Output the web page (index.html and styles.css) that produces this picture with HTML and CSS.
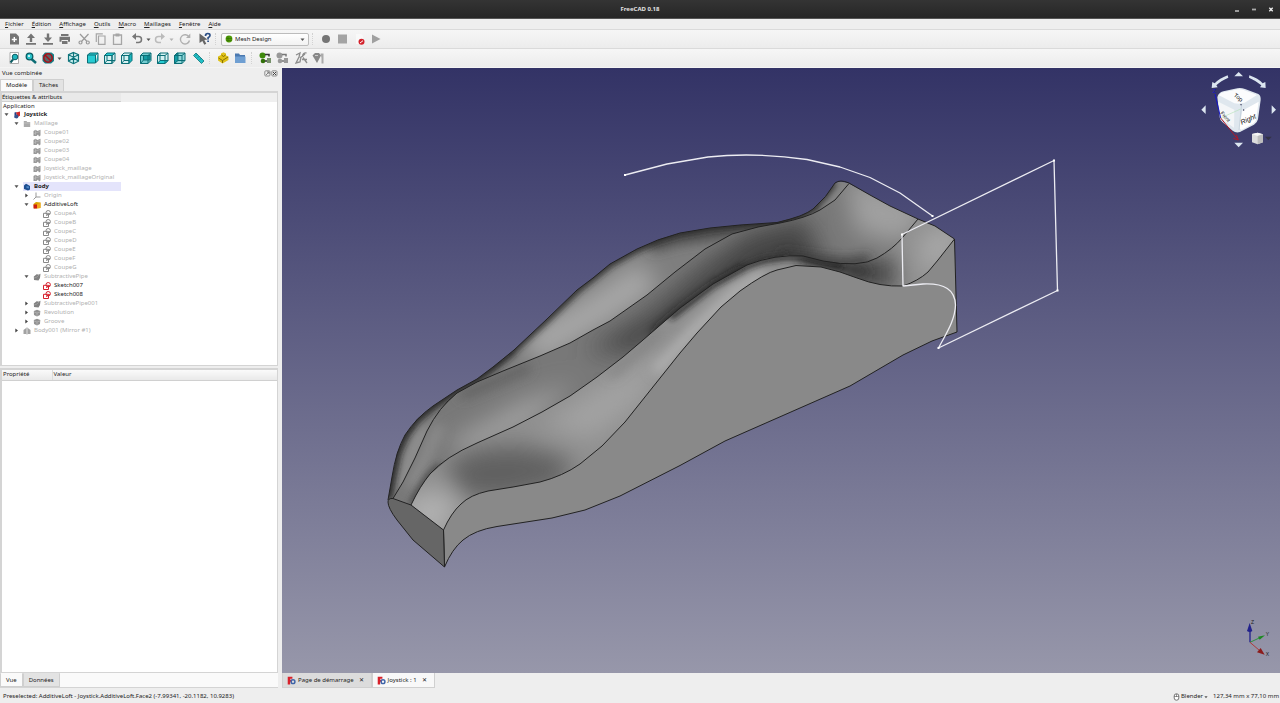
FILE: index.html
```html
<!DOCTYPE html>
<html lang="fr">
<head>
<meta charset="utf-8">
<title>FreeCAD 0.18</title>
<link rel="stylesheet" href="styles.css">
</head>
<body>
<svg class="sprite" aria-hidden="true">
  <symbol id="caret" viewBox="0 0 5 5"><path d="M.5 1.5h4l-2 2.500z" fill="#555"/></symbol>
  <symbol id="down" viewBox="0 0 7 7"><path d="M1.500 2.300h4L3.500 5z" fill="#555"/></symbol>
  <symbol id="right" viewBox="0 0 7 7"><path d="M2.300 1.500v4L5 3.500z" fill="#444"/></symbol>
  <symbol id="mesh" viewBox="0 0 8 8"><path d="M.5 2l2-1.200 2 1.200L7.500.8v5.700L6 7.500 5 5.500 3.500 7 .5 7z" fill="#989898"/><path d="M2.500 1v5M1 4.500l6-2" stroke="#c4c4c4" stroke-width=".5"/></symbol>
  <symbol id="sketch" viewBox="0 0 8 8"><g fill="none" stroke="currentColor" stroke-width="1"><path d="M.5 3.300h5v4.200h-5z"/><circle cx="5.200" cy="2.700" r="2.200"/><path d="M3 5.500l4-2"/></g></symbol>
  <symbol id="folder" viewBox="0 0 8 8"><path d="M.8 1h2.700l.7 1h3v5H.8z" fill="#aaa"/><path d="M1 3h6" stroke="#ccc" stroke-width=".6"/></symbol>
  <symbol id="joy" viewBox="0 0 8 8"><path d="M1.500 1.500l2-.5v6h-2z" fill="#24418a"/><path d="M3 1.500L7 .5v4.200L4.500 6z" fill="#d22b2b"/><circle cx="3.500" cy="5.500" r="1.900" fill="#35558f"/></symbol>
  <symbol id="body" viewBox="0 0 8 8"><path d="M1 2.500L3 .8l1.500.7L7 3v3.500L5 7.500 1 6z" fill="#1d4f91"/><path d="M3.500 3L6 3.500v2L3.500 5z" fill="#4d86c6"/></symbol>
  <symbol id="origin" viewBox="0 0 8 8"><path d="M3 .5v4.500h4.500M3 5L.5 7.500" stroke="#999" fill="none"/></symbol>
  <symbol id="loft" viewBox="0 0 8 8"><path d="M.5 3L3 1l4.500.5V7L1 7.500z" fill="#d9a400"/><path d="M.5 3.500H4v4H.5z" fill="#cc1d12"/><path d="M4 3.500l3.500-2V7L4 7.500z" fill="#f0a81c"/></symbol>
  <symbol id="pipe" viewBox="0 0 8 8"><path d="M.8 3.500L4 1l1 .8L7.500.8 7 5 5.500 7.500 1 7z" fill="#828282"/><path d="M1 5l3-1 3-3" stroke="#aaa" stroke-width=".6" fill="none"/></symbol>
  <symbol id="rev" viewBox="0 0 8 8"><path d="M.8 2L4 .8 7.300 2 7 6 4 7.500 1 6z" fill="#929292"/><path d="M1 3l3 1 3-1M4 4v3" stroke="#b8b8b8" stroke-width=".7" fill="none"/></symbol>
  <symbol id="mirror" viewBox="0 0 8 8"><path d="M.5 3l2.700-2v6H.5zM4.800 1l2.700 2v4H4.800z" fill="#a2a2a2"/><path d="M4 .5v7" stroke="#777" stroke-width=".7"/></symbol>
  <symbol id="fc" viewBox="0 0 10 10"><path d="M.8.8h5.200v2.200H3.500v1.300H5.500v2H3.500V9.500H.8z" fill="#d8202a"/><circle cx="6.700" cy="6.300" r="2.100" fill="none" stroke="#3d63a8" stroke-width="1.600"/></symbol>
  <symbol id="part" viewBox="0 0 16 16"><path d="M3 6.500L6 5V3.500l2.500-1.300L11 3.500V5.500l2.500 1V10l-6 3.500-4.500-3z" fill="#e0c219"/><path d="M3.500 8l4 2.500 5.500-3.500M7.500 10.500v2.500M6.500 5l2 1.500L10.500 5" stroke="#7d6800" stroke-width=".9" fill="none"/></symbol>
</svg>

<header class="titlebar">
  <h1>FreeCAD 0.18</h1>
  <div class="wm">
    <button aria-label="Réduire"><svg viewBox="0 0 8 8"><path d="M2 6h4" stroke="#e4e4e4" stroke-width="1.200"/></svg></button>
    <button aria-label="Agrandir"><svg viewBox="0 0 8 8"><path d="M2 4.500h4" stroke="#aaa" stroke-width="1.800"/></svg></button>
    <button aria-label="Fermer"><svg viewBox="0 0 8 8"><path d="M2.300 2.800l3.400 3.400M5.700 2.800L2.300 6.200" stroke="#eee" stroke-width="1.300"/></svg></button>
  </div>
</header>

<nav class="menubar">
  <button><u>F</u>ichier</button><button><u>É</u>dition</button><button><u>A</u>ffichage</button><button><u>O</u>utils</button><button><u>M</u>acro</button><button><u>M</u>aillages</button><button><u>F</u>enêtre</button><button><u>A</u>ide</button>
</nav>

<div class="toolbar">
  <div class="group">
    <button aria-label="Nouveau"><svg viewBox="0 0 16 16"><path d="M4 2.500h6l3 3v8H4z" fill="#757575"/><path d="M8.300 6v5M5.800 8.500h5" stroke="#fff" stroke-width="1.400"/></svg></button>
    <button aria-label="Ouvrir"><svg viewBox="0 0 16 16"><path d="M8 2.500l4 4.500H9.200v4H6.800V7H4zM3 12h10v1.700H3z" fill="#757575"/></svg></button>
    <button aria-label="Enregistrer"><svg viewBox="0 0 16 16"><path d="M6.800 2.500h2.400v4H12L8 11 4 6.500h2.800zM3 12h10v1.700H3z" fill="#757575"/></svg></button>
    <button aria-label="Imprimer"><svg viewBox="0 0 16 16"><path d="M4 3h7.500v2H4zM2.500 5.700h10.500v5H11V9H4.500v1.700h-2zM5 10h5.500v3H5z" fill="#757575"/></svg></button>
  </div>
  <div class="group">
    <button aria-label="Couper"><svg viewBox="0 0 16 16" fill="none" stroke="#9a9a9a" stroke-width="1.200"><path d="M4 3l7 7.500M12.500 3L5.500 10.500"/><circle cx="4.500" cy="11.500" r="1.500"/><circle cx="11.800" cy="11.500" r="1.500"/></svg></button>
    <button aria-label="Copier"><svg viewBox="0 0 16 16" fill="none" stroke="#a6a6a6" stroke-width="1.200"><path d="M5.500 5h6.500v8.300H5.500zM3.300 11V2.800h6.500"/></svg></button>
    <button aria-label="Coller"><svg viewBox="0 0 16 16" fill="none" stroke="#a6a6a6" stroke-width="1.300"><path d="M3.500 4h8v9.300h-8z"/><path d="M5.500 4h4" stroke-width="3"/></svg></button>
  </div>
  <div class="group">
    <button aria-label="Annuler"><svg viewBox="0 0 16 16"><path d="M4.500 5.500h5a3 3 0 010 6H7" fill="none" stroke="#777" stroke-width="1.500"/><path d="M3 5.500L7 2v7z" fill="#777"/></svg></button>
    <button class="drop" aria-label="Liste d'annulation"><svg><use href="#caret"/></svg></button>
    <button aria-label="Rétablir"><svg viewBox="0 0 16 16"><path d="M10.500 5.500h-4a3 3 0 000 6H9" fill="none" stroke="#bbb" stroke-width="1.500"/><path d="M13 5.500L9 2v7z" fill="#bbb"/></svg></button>
    <button class="drop faint" aria-label="Liste de rétablissement"><svg><use href="#caret"/></svg></button>
  </div>
  <button aria-label="Actualiser"><svg viewBox="0 0 16 16"><path d="M12 6A4.600 4.600 0 1012.500 9.500" fill="none" stroke="#b0b0b0" stroke-width="1.400"/><path d="M13.300 2.500v4.500H9z" fill="#b0b0b0"/></svg></button>
  <button aria-label="Qu'est-ce que c'est ?"><svg viewBox="0 0 16 16"><path d="M3.500 2.500l8 6-3.200.5 2 3.700-2 1-1.900-3.700L3.500 12z" fill="#666"/><path d="M9.500 5q0-2.500 2.300-2.500T14 4.500q0 1.200-1.900 2.300v1.700M12.100 9.500v1.500" stroke="#2c4f86" stroke-width="1.700" fill="none"/></svg></button>
  <span class="handle"></span>
  <label class="combo"><svg viewBox="0 0 8 8"><circle cx="4" cy="4" r="3.400" fill="#4e9a06"/><path d="M1 3.500h6M1.500 5.500h5M3 1v6" stroke="#2f6604" stroke-width=".5"/></svg>
    <select aria-label="Atelier"><option>Mesh Design</option></select><svg class="arrow"><use href="#caret"/></svg></label>
  <span class="handle"></span>
  <div class="group">
    <button aria-label="Enregistrer la macro"><svg viewBox="0 0 16 16"><circle cx="8" cy="8" r="4" fill="#757575"/></svg></button>
    <button aria-label="Arrêter"><svg viewBox="0 0 16 16"><path d="M3 3.500h9v9H3z" fill="#a3a3a3"/></svg></button>
    <button aria-label="Macros"><svg viewBox="0 0 16 16"><path d="M4 3h5l2 2v8H4z" fill="#f9f9f9"/><circle cx="9.500" cy="10.800" r="3" fill="#d3222c"/><path d="M8 12l3-2.300" stroke="#fff"/></svg></button>
    <button aria-label="Exécuter"><svg viewBox="0 0 16 16"><path d="M3 3.500l8.500 4.500L3 12.500z" fill="#a0a0a0"/></svg></button>
  </div>
</div>

<div class="toolbar">
  <div class="group">
    <button aria-label="Tout afficher"><svg viewBox="0 0 16 16"><path d="M4 2.500h8.500v11H4z" fill="#fff" stroke="#999" stroke-width=".8"/><circle cx="9" cy="7" r="2.800" fill="#20b5bd" stroke="#0c5c63"/><path d="M7 9.500L4.500 12.500" stroke="#0c5c63" stroke-width="2"/></svg></button>
    <button aria-label="Zoom sur la sélection"><svg viewBox="0 0 16 16"><path d="M8.500 9l4.500 4" stroke="#0c6d75" stroke-width="2.500"/><circle cx="6.500" cy="6.500" r="3.300" fill="#2bc4cb" stroke="#0c5c63" stroke-width="1.300"/><circle cx="6" cy="6" r="1" fill="#fff"/></svg></button>
    <button aria-label="Style de représentation"><svg viewBox="0 0 16 16"><path d="M2.500 5.500L5 2.500h6.500l2.500 2v6.500l-3 2.500H5L2.500 11z" fill="#168088"/><circle cx="8" cy="8" r="4.200" fill="#5a6668" stroke="#a81018" stroke-width="1.500"/><path d="M5 5l6 6" stroke="#a81018" stroke-width="1.500"/></svg></button>
    <button class="drop" aria-label="Styles"><svg><use href="#caret"/></svg></button>
  </div>
  <button aria-label="Isométrique"><svg viewBox="0 0 16 16" fill="#c4eeef" stroke="#0d747b" stroke-width="1.200"><path d="M8.500 2.500l5 2.200v6.500l-5 2.500-5-2.500V4.700zM3.500 4.700l5 2.500 5-2.500M8.500 2.500v11.200M3.500 11l5-3 5 3"/></svg></button>
  <div class="group cubes">
    <button aria-label="Face"><svg viewBox="0 0 16 16"><path d="M3.500 5h8v8h-8zM3.500 5L6 3h8l-2.500 2M14 3v7.500L11.500 13" fill="#26cbd2"/></svg></button>
    <button aria-label="Dessus"><svg viewBox="0 0 16 16"><path d="M3.500 5.500h7.500v8H3.500zM14 3v7.500l-3 3v-8z" fill="#d4f0f1"/><path d="M3.500 5.500L6 3h8l-3 2.500z" fill="#26cbd2"/><path d="M3.500 13.500L6 10.500h8M6 10.500V6"/></svg></button>
    <button aria-label="Droite"><svg viewBox="0 0 16 16"><path d="M3.500 5.500h7.500v8H3.500zM3.500 5.500L6 3h8l-3 2.500z" fill="#d4f0f1"/><path d="M14 3v7.500l-3 3v-8z" fill="#1bb6be"/><path d="M3.500 13.500L6 10.500h5M6 10.500V6"/></svg></button>
  </div>
  <div class="group cubes">
    <button aria-label="Arrière"><svg viewBox="0 0 16 16"><path d="M3.500 5.500L6 3h8v7.500l-3 3H3.500z" fill="#74cdd1"/><path d="M6.500 5.500h6.500V10H6.500z" fill="#159ca4"/><path d="M3.500 5.500h7.500v8M11 5.500L14 3M3.500 13.500L6.500 10"/></svg></button>
    <button aria-label="Dessous"><svg viewBox="0 0 16 16"><path d="M3.500 5.500L6 3h8v7.500l-3 3H3.500z" fill="#d4f0f1"/><path d="M3.500 13.500L6 10.500h8l-3 3z" fill="#26cbd2"/><path d="M3.500 5.500h7.500v8M11 5.500L14 3M6 3v7.500"/></svg></button>
    <button aria-label="Gauche"><svg viewBox="0 0 16 16"><path d="M3.500 5.500L6 3h8v7.500l-3 3H3.500z" fill="#8fd6d9"/><path d="M3.500 5.500L7 3v7.500l-3.500 3z" fill="#159ca4"/><path d="M3.500 5.500h7.500v8M11 5.500L14 3M7 10.500h7"/></svg></button>
  </div>
  <button aria-label="Mesurer"><svg viewBox="0 0 16 16"><path d="M6 3l8 8-2.500 2.500-8-8z" fill="#22c0c7" stroke="#0c747a" stroke-width=".8"/><path d="M6 5.500l1-1M8 7.500l1-1M10 9.500l1-1" stroke="#0c5c63"/></svg></button>
  <span class="handle"></span>
  <div class="group">
    <button aria-label="Créer une pièce"><svg><use href="#part"/></svg></button>
    <button aria-label="Créer un groupe"><svg viewBox="0 0 16 16"><path d="M3 3.500h4l1 1.500h5v8H3z" fill="#4b79b0"/><path d="M3 6.500h10.500v6.500H3z" fill="#6f9fd2"/></svg></button>
  </div>
  <span class="handle"></span>
  <div class="group">
    <button aria-label="Importer un maillage"><svg viewBox="0 0 16 16"><circle cx="5.500" cy="5.500" r="3" fill="#3e8a0c"/><circle cx="6" cy="11" r="2.300" fill="#2f6f08"/><path d="M8 4.500h4v2M8 11h4" stroke="#333" stroke-width="1.500" fill="none"/><path d="M10 8h4v5h-4z" fill="#77916b"/></svg></button>
    <button aria-label="Exporter un maillage"><svg viewBox="0 0 16 16"><circle cx="5.500" cy="5.500" r="3" fill="#999"/><circle cx="6" cy="11" r="2.300" fill="#999"/><path d="M8 4.500h4v2M8 11h4" stroke="#777" stroke-width="1.500" fill="none"/><path d="M10 8h4v5h-4z" fill="#999"/></svg></button>
  </div>
  <div class="group">
    <button aria-label="Analyser"><svg viewBox="0 0 16 16" stroke="#8c8c8c" stroke-width="1.300" fill="none"><path d="M3 5l4-2-1 4-3 6 4-1 1-5M13.500 3q-4-.5-4 4M9 9.500h5M10 7.500l4 5.500M7 8l5-4"/></svg></button>
    <button aria-label="Découper"><svg viewBox="0 0 16 16"><path d="M2.500 5.500L5 3h4l2 2.500L7 13z" fill="#888"/><path d="M5 5.500h3" stroke="#ccc"/><path d="M10.500 3.500H13.500v10h-2V8z" fill="#aaa"/></svg></button>
  </div>
</div>

<main class="work">
  <aside class="dock">
    <div class="dock-title"><h2>Vue combinée</h2>
      <button aria-label="Détacher"><svg viewBox="0 0 7 7"><rect x=".8" y=".8" width="5.200" height="5.200" rx="1" fill="none" stroke="#777" stroke-width=".8"/><path d="M2 5l2.500-2.500M3 2h2v2" stroke="#555" stroke-width=".7" fill="none"/></svg></button>
      <button aria-label="Fermer"><svg viewBox="0 0 7 7"><rect x=".8" y=".8" width="5.200" height="5.200" rx="1" fill="none" stroke="#777" stroke-width=".8"/><path d="M2 2l3 3M5 2L2 5" stroke="#333" stroke-width=".9"/></svg></button>
    </div>
    <div class="tabs"><button class="tab on">Modèle</button><button class="tab">Tâches</button></div>
    <section class="tree">
      <div class="tree-head"><span>Étiquettes &amp; attributs</span></div>
      <p class="root">Application</p>
      <ul>
        <li class="d0 bold"><button class="tw" aria-label="Replier"><svg><use href="#down"/></svg></button><span class="it"><svg><use href="#joy"/></svg>Joystick</span></li>
        <li class="d1 dim"><button class="tw" aria-label="Replier"><svg><use href="#down"/></svg></button><span class="it"><svg><use href="#folder"/></svg>Maillage</span></li>
        <li class="d2 dim"><i class="tw"></i><span class="it"><svg><use href="#mesh"/></svg>Coupe01</span></li>
        <li class="d2 dim"><i class="tw"></i><span class="it"><svg><use href="#mesh"/></svg>Coupe02</span></li>
        <li class="d2 dim"><i class="tw"></i><span class="it"><svg><use href="#mesh"/></svg>Coupe03</span></li>
        <li class="d2 dim"><i class="tw"></i><span class="it"><svg><use href="#mesh"/></svg>Coupe04</span></li>
        <li class="d2 dim"><i class="tw"></i><span class="it"><svg><use href="#mesh"/></svg>Joystick_maillage</span></li>
        <li class="d2 dim"><i class="tw"></i><span class="it"><svg><use href="#mesh"/></svg>Joystick_maillageOriginal</span></li>
        <li class="d1 bold hl"><button class="tw" aria-label="Replier"><svg><use href="#down"/></svg></button><span class="it"><svg><use href="#body"/></svg>Body</span></li>
        <li class="d2 dim"><button class="tw" aria-label="Déplier"><svg><use href="#right"/></svg></button><span class="it"><svg><use href="#origin"/></svg>Origin</span></li>
        <li class="d2"><button class="tw" aria-label="Replier"><svg><use href="#down"/></svg></button><span class="it"><svg><use href="#loft"/></svg>AdditiveLoft</span></li>
        <li class="d3 dim"><i class="tw"></i><span class="it"><svg><use href="#sketch"/></svg>CoupeA</span></li>
        <li class="d3 dim"><i class="tw"></i><span class="it"><svg><use href="#sketch"/></svg>CoupeB</span></li>
        <li class="d3 dim"><i class="tw"></i><span class="it"><svg><use href="#sketch"/></svg>CoupeC</span></li>
        <li class="d3 dim"><i class="tw"></i><span class="it"><svg><use href="#sketch"/></svg>CoupeD</span></li>
        <li class="d3 dim"><i class="tw"></i><span class="it"><svg><use href="#sketch"/></svg>CoupeE</span></li>
        <li class="d3 dim"><i class="tw"></i><span class="it"><svg><use href="#sketch"/></svg>CoupeF</span></li>
        <li class="d3 dim"><i class="tw"></i><span class="it"><svg><use href="#sketch"/></svg>CoupeG</span></li>
        <li class="d2 dim"><button class="tw" aria-label="Replier"><svg><use href="#down"/></svg></button><span class="it"><svg><use href="#pipe"/></svg>SubtractivePipe</span></li>
        <li class="d3 red"><i class="tw"></i><span class="it"><svg><use href="#sketch"/></svg>Sketch007</span></li>
        <li class="d3 red"><i class="tw"></i><span class="it"><svg><use href="#sketch"/></svg>Sketch008</span></li>
        <li class="d2 dim"><button class="tw" aria-label="Déplier"><svg><use href="#right"/></svg></button><span class="it"><svg><use href="#pipe"/></svg>SubtractivePipe001</span></li>
        <li class="d2 dim"><button class="tw" aria-label="Déplier"><svg><use href="#right"/></svg></button><span class="it"><svg><use href="#rev"/></svg>Revolution</span></li>
        <li class="d2 dim"><button class="tw" aria-label="Déplier"><svg><use href="#right"/></svg></button><span class="it"><svg><use href="#rev"/></svg>Groove</span></li>
        <li class="d1 dim"><button class="tw" aria-label="Déplier"><svg><use href="#right"/></svg></button><span class="it"><svg><use href="#mirror"/></svg>Body001 (Mirror #1)</span></li>
      </ul>
    </section>
    <section class="props">
      <table><thead><tr><th>Propriété</th><th>Valeur</th></tr></thead></table>
    </section>
    <div class="tabs bottom"><button class="tab on">Vue</button><button class="tab">Données</button></div>
  </aside>

  <section class="mdi">
    <div class="view">
      <svg class="scene" viewBox="282 68 998 605" preserveAspectRatio="xMidYMid slice" role="img" aria-label="Joystick">
        <defs>
          <clipPath id="c1"><path id="r1" d="M388 500 392 477 397 453 405 435 417 419 433 406 457 390 477 379 493 367 514 350 547 319 577 290 593 278 610 264 637 249 660 239 680 233 710 228 740 225 777 222.500 800 216 813 209 825 197 835 183 840 181.500 849 183 860 260 410 500z"/></clipPath>
          <clipPath id="c2"><path id="r2" d="M393 498.500 403 482 415 458 427 431 441 409 457 393 477 382 503 371 540 356 570 343 593 330 610 321 647 295 675 272 705 249 732 234 758 227 780 223 803 217 820 210 835 200 849 183.500 870 195 890 206 918 219 900 287 640 385 560 440 480 470 430 500 411 505z"/></clipPath>
          <clipPath id="c3"><path id="r3" d="M411 505 420 488 430 474 452 456 477 443 513 427 542 412 570 396 597 377 623 357 643 340 680 308 713 284 747 265 765 258.500 787 255 803 256 823 261 843 263.500 860 263 877 258 892 249 903 237 918 219 935 226 954.500 239 938 262 928 274 917 283 903 288 893 289 875 286 857 280 840 274 821 269 796 267.500 777 272 758 280 740 293 721 309 697 335 680 355 625 424 602 448 580 466 560 477 540 484 513 489 488 493 468 501 458 508.500 448 523 443.500 530z"/></clipPath>
          <filter id="b3" x="-50%" y="-50%" width="200%" height="200%"><feGaussianBlur stdDeviation="3"/></filter>
          <filter id="b6" x="-50%" y="-50%" width="200%" height="200%"><feGaussianBlur stdDeviation="6"/></filter>
          <filter id="b12" x="-50%" y="-50%" width="200%" height="200%"><feGaussianBlur stdDeviation="12"/></filter>
        </defs>
        <g clip-path="url(#c1)">
          <use href="#r1" fill="#7e7e7e"/>
          <g fill="none" filter="url(#b12)">
            <path d="M530 350 600 308 650 275" stroke="#a8a8a8" stroke-width="34"/>
          </g>
          <g fill="none" filter="url(#b6)">
            <path d="M402 490 412 455 425 428" stroke="#989898" stroke-width="8"/>
            <path d="M650 246 680 238 740 230 800 218" stroke="#4a4a4a" stroke-width="12"/>
          </g>
          <g fill="none" filter="url(#b3)">
            <path d="M388 500 392 477 397 453 405 435 417 419 433 406 457 390 477 379 493 367 514 350" stroke="#1d1d1d" stroke-width="7"/>
            <path d="M500 362 547 319 577 290 610 264 637 249 660 239 680 233 710 228 740 225 777 222 800 216 813 209 825 197 835 183" stroke="#202020" stroke-width="6"/>
            <path d="M825 208 846 184" stroke="#888" stroke-width="6"/>
          </g>
        </g>
        <g clip-path="url(#c2)">
          <use href="#r2" fill="#787878"/>
          <g filter="url(#b12)">
            <path d="M445 445 520 402 575 382 530 428 470 455z" fill="#a0a0a0"/>
            <path d="M585 352 650 312 700 268 750 232 805 218 825 270 720 285 640 352z" fill="#444"/>
            <path d="M845 175 935 205 905 245 855 232z" fill="#a0a0a0"/>
          </g>
          <g fill="none" filter="url(#b6)">
            <path d="M655 336 680 314 713 290 747 271" stroke="#161616" stroke-width="11"/>
            <path d="M460 396 490 384 530 367" stroke="#5c5c5c" stroke-width="7"/>
            <path d="M410 488 425 458 440 425" stroke="#909090" stroke-width="9"/>
            <path d="M780 256 823 262 850 264 870 260" stroke="#333" stroke-width="9"/>
          </g>
          <g fill="none" filter="url(#b3)">
            <path d="M411 505 420 488 430 474 440 465" stroke="#444" stroke-width="5"/>
            <path d="M713 286 747 266 765 259 787 256" stroke="#2a2a2a" stroke-width="4"/>
          </g>
        </g>
        <g clip-path="url(#c3)">
          <use href="#r3" fill="#8f8f8f"/>
          <g filter="url(#b12)">
            <path d="M445 462 480 448 520 446 570 458 565 485 500 500 460 496z" fill="#606060"/>
            <path d="M540 425 600 385 670 350 640 405 590 440z" fill="#a2a2a2"/>
            <path d="M400 500 440 488 462 500 440 540 410 530z" fill="#b0b0b0"/>
            <path d="M820 255 860 258 895 258 895 292 850 284z" fill="#3c3c3c"/>
            <path d="M918 235 968 220 950 262 922 277z" fill="#a8a8a8"/>
          </g>
          <g fill="none" filter="url(#b6)">
            <path d="M655 372 695 329 735 292 765 275" stroke="#b0b0b0" stroke-width="12"/>
            <path d="M610 376 640 350 660 330" stroke="#7c7c7c" stroke-width="5"/>
            <path d="M800 258 825 264 850 269 868 273" stroke="#2c2c2c" stroke-width="8"/>
          </g>
          <g fill="none" filter="url(#b3)">
            <path d="M670 318 713 285 747 266 765 260 787 257 803 258 823 263 843 266" stroke="#1c1c1c" stroke-width="5"/>
          </g>
        </g>
        <g stroke="#222" stroke-width="1" stroke-linejoin="round">
          <path fill="#898989" d="M443.500 530Q451 513 461 504 470 495 488 491L513 487 540 482Q563 476 580 464L602 446 625 422 680 353 697 333 721 307 740 291Q765 273 777 270L796 265.500 821 267 840 272 857 278Q880 287 903 286 918 281 928 272L938 260 954.500 239 957 332 932 341 903 355 850 386 725 441 680 465.500 620 496 585 510 552 518 497 526.500Q475 530 463 540 452 549 444.500 567z"/>
          <path fill="#666" d="M388 502Q388 498 393 498.500L411 505 443.500 530 444.500 567 413 540 397 520Q388 508 388 502z"/>
          <g fill="none">
            <path d="M388 500 392 477Q396 451 405 435 416 418 433 406L457 390 477 379 493 367 514 350 547 319 577 290 593 278 610 264 637 249Q657 239 680 233 710 227 740 225L777 222.500Q805 216 813 209 827 197 835 183 840 179 849 183L870 195 890 206 918 219 935 226 954.500 239"/>
            <path d="M393 498.500 403 482 415 458 427 431Q439 407 457 393L477 382 503 371 540 356 570 343 593 330 610 321 647 295 675 272 705 249 732 234 758 227 780 223Q806 218 820 210L835 200 849 183.500"/>
            <path d="M411 505Q420 486 430 474 445 457 477 443L513 427 542 412 570 396 597 377 623 357 643 340 680 308 713 284 747 265Q775 254 803 256L823 261Q860 268 877 258 893 249 903 237L918 219"/>
          </g>
        </g>
        <g fill="none" stroke="#ececf2" stroke-width="1.300" stroke-linejoin="round">
          <path d="M625 175 667 164 708 157Q755 152 807 159.500L840 167 870 177.500 900 193 932.500 216"/>
          <path d="M903 286 923 284C945 283 955 290 955.500 305 955 320 947 332 938.500 348L1057.500 290.500 1054 160.500 902 234.500z"/>
        </g>
        <path d="M624 174h2v2h-2zM931.500 215h2v2h-2zM901 233.500h2v2h-2zM1053 159.500h2v2h-2zM1056.500 289.500h2v2h-2zM937.500 347h2v2h-2z" fill="#fff"/>
      </svg>
      <svg class="cube" viewBox="0 24 300 276" role="img" aria-label="Cube de navigation">
        <g fill="#dce6f0">
          <path d="M176 36l13 13h-26zM176 262l13-14h-26zM64 149l13-13v26zM288 149l-13-13v26z"/>
          <path d="M143 46Q118 55 104 70L97 66 95 84 113 82 109 76Q122 63 145 53zM208 46Q235 55 248 70L256 66 257 84 240 82 244 76Q230 63 207 53z"/>
        </g>
        <path d="M112 112Q115 98 130 94L172 85Q182 83 195 87L235 102Q243 107 242 120L234 178Q232 188 222 194L180 216Q168 220 158 212L128 187Q120 182 119 172z" fill="#dfe7ee"/>
        <path d="M130 97l44-9q9-1 17 2l40 15-37 23-19 3-12-1-46-24q3-7 13-9z" fill="#fbfcfd"/>
        <path d="M115 125l48 24-1 54-34-24q-6-4-7-12z" fill="#f4f6f8"/>
        <path d="M187 152l49-27-8 55q-2 7-9 11l-34 18q-7-1-7-9z" fill="#fff"/>
        <path d="M185 132l-8 78" stroke="#c8d4de" stroke-width="3"/>
        <path d="M122 174L105 102" stroke="#1515c8" stroke-width="3"/>
        <path d="M122 174l50 62m-3-12l6 16-15-5" stroke="#b01828" stroke-width="3" fill="none"/>
        <path d="M122 174l60-27" stroke="#b6e3bd" stroke-width="2"/>
        <g font-family="Liberation Sans" fill="#111">
          <text transform="translate(160 108) rotate(38)" font-size="18">Top</text>
          <text transform="translate(185 194) rotate(-24)" font-size="21" font-style="italic">Right</text>
          <text transform="translate(121 160) rotate(50)" font-size="15">Front</text>
        </g>
        <text x="98" y="100" font-family="Liberation Sans" font-size="16" fill="#1515c8">Z</text>
        <circle cx="183" cy="134" r="2" fill="#224"/><circle cx="191" cy="150" r="2" fill="#224"/>
        <path d="M216 222l17-4 16 5v24l-16 6-17-6z" fill="#ddd"/><path d="M216 222l17-4 16 5-16 5z" fill="#f5f5f5"/><path d="M249 223v24l-16 6v-25z" fill="#bdbdbd"/>
        <path d="M255 230h20l-10 11z" fill="#333344"/>
      </svg>
      <svg class="axes" viewBox="0 0 360 189" role="img" aria-label="Axes">
        <path d="M270 97V60" stroke="#22228c" stroke-width="4"/><path d="M269 39l8 24q-8 6-16 0z" fill="#22228c"/>
        <path d="M270 97l34-16" stroke="#2f9040" stroke-width="3"/><path d="M315 76l-16 13-5-9z" fill="#1c8a20"/>
        <path d="M270 97l28 24" stroke="#b03a3a" stroke-width="3"/><path d="M314 134l-23-7 11-13z" fill="#8c1c1c"/>
        <g font-family="Liberation Sans" font-size="15" fill="#222"><text x="273" y="41">Z</text><text x="317" y="77">Y</text><text x="317" y="137">X</text></g>
      </svg>
    </div>
    <div class="docs">
      <div class="doc"><svg><use href="#fc"/></svg><span>Page de démarrage</span><button aria-label="Fermer">✕</button></div>
      <div class="doc on"><svg><use href="#fc"/></svg><span>Joystick : 1</span><button aria-label="Fermer">✕</button></div>
    </div>
  </section>
</main>

<footer class="status">
  <span>Preselected: AdditiveLoft - Joystick.AdditiveLoft.Face2 (-7.99341, -20.1182, 10.9283)</span>
  <button class="nav"><svg viewBox="0 0 7 8"><rect x="1.200" y=".8" width="4.600" height="6.400" rx="2.200" fill="#fff" stroke="#555" stroke-width=".8"/><path d="M3.500 1v3M1.200 3.500h4.600" stroke="#555" stroke-width=".6"/></svg>Blender<svg class="arrow"><use href="#caret"/></svg></button>
  <span>127,34 mm x 77,10 mm</span>
</footer>
</body>
</html>
```

FILE: styles.css
```css
* { box-sizing: border-box; }
body {
  margin: 0;
  height: 100vh;
  display: flex;
  flex-direction: column;
  overflow: hidden;
  background: #eeeeee;
  color: #222222;
  font: 6px/9px "Noto Sans", sans-serif;
}
button, select {
  margin: 0;
  padding: 0;
  border: 0;
  background: none;
  color: inherit;
  font: inherit;
}
button svg { display: block; width: 100%; height: 100%; }
h1, h2, p, ul { margin: 0; padding: 0; font: inherit; list-style: none; }
.sprite { position: absolute; width: 0; height: 0; }

.titlebar {
  flex: none;
  height: 19px;
  display: flex;
  align-items: center;
  justify-content: center;
  position: relative;
  background: linear-gradient(#343434, #262626);
  border-bottom: 1px solid #555;
}
.titlebar h1 { color: #e2e2e2; font-weight: 700; }
.wm { position: absolute; right: 5px; display: flex; gap: 9px; }
.wm button { width: 8px; height: 8px; }

.menubar {
  flex: none;
  height: 10px;
  display: flex;
  gap: 8px;
  padding-left: 5px;
}
.menubar u { text-underline-offset: 1px; text-decoration-thickness: 1px; }

.toolbar {
  flex: none;
  height: 19px;
  display: flex;
  align-items: center;
  gap: 3px;
  padding-left: 6px;
  background: linear-gradient(#f6f6f6, #ececec);
  border-top: 1px solid #dadada;
}
.toolbar + .toolbar { height: 20px; border-bottom: 1px solid #f4f4f4; }
.toolbar button { width: 16px; height: 16px; }
.toolbar .drop { width: 5px; height: 5px; }
.faint { opacity: .4; }
.group { display: flex; align-items: center; gap: 1px; }
.cubes { stroke: #0b6e76; stroke-width: 1; fill: none; stroke-linejoin: round; }
.handle { width: 3px; height: 12px; border-left: 1px dotted #d2d2d2; }
.combo {
  width: 88px;
  height: 13px;
  display: flex;
  align-items: center;
  padding: 0 3px;
  gap: 2px;
  border: 1px solid #bcbcbc;
  border-radius: 2px;
  background: linear-gradient(#fff, #f2f2f2);
}
.combo svg { width: 8px; height: 8px; }
.combo .arrow { width: 5px; height: 5px; }
.combo select { flex: 1; appearance: none; height: 9px; }

.work { flex: 1; display: flex; min-height: 0; }
.dock { flex: none; width: 282px; padding-right: 4px; display: flex; flex-direction: column; }
.dock-title { display: flex; align-items: center; height: 11px; padding: 0 0 0 2px; }
.dock-title h2 { flex: 1; }
.dock-title button { width: 7px; height: 7px; }
.tabs { display: flex; height: 12px; }
.tab {
  height: 12px;
  padding: 0 5px;
  border: 1px solid #cfcfcf;
  border-bottom: 0;
  background: #e3e3e3;
  border-radius: 1px 1px 0 0;
}
.tab.on { background: #fafafa; }
.tree, .props { border: 2px solid #d4d4d4; border-width: 2px 1px 1px 2px; background: #fff; }
.tree { height: 275px; flex: none; }
.tree-head { height: 9px; background: #efefef; }
.tree-head span { display: block; width: 119px; height: 9px; background: #e9e9e9; border-bottom: 1px solid #d0d0d0; }
.root { padding-left: 1px; height: 8px; line-height: 8px; }
.tree li { width: 119px; height: 9px; display: flex; align-items: center; gap: 3px; padding-left: 1px; }
.tree .d1 { padding-left: 11px; }
.tree .d2 { padding-left: 21px; }
.tree .d3 { padding-left: 31px; }
.tw { width: 7px; height: 7px; flex: none; }
.it { flex: 1; display: flex; align-items: center; gap: 3px; white-space: nowrap; }
.it svg { width: 8px; height: 8px; flex: none; color: #888; }
.bold { font-weight: 700; }
.dim { color: #b0b0b0; }
.red svg { color: #d61f2c; }
.hl .it { background: #e4e4fb; }
.props { flex: 1; margin-top: 2px; }
.props table { width: 100%; border-collapse: collapse; table-layout: fixed; }
.props th {
  height: 10px;
  padding: 0 1px;
  text-align: left;
  font-weight: 400;
  background: linear-gradient(#fafafa, #e9e9e9);
  border-bottom: 1px solid #d0d0d0;
}
.props th:first-child { width: 50px; border-right: 1px solid #dcdcdc; }
.tabs.bottom { height: 15px; background: #fafafa; border-bottom: 1px solid #d4d4d4; }
.bottom .tab { height: 14px; padding-top: 1px; border: 1px solid #cfcfcf; border-top: 0; }

.mdi { flex: 1; min-width: 0; display: flex; flex-direction: column; }
.view { flex: 1; min-height: 0; position: relative; background: linear-gradient(#333366, #9797aa); }
.scene { display: block; width: 100%; height: 100%; }
.cube { position: absolute; top: 0; right: 0; width: 100px; height: 92px; }
.axes { position: absolute; bottom: 0; right: 0; width: 120px; height: 63px; }
.docs { display: flex; height: 15px; flex: none; }
.doc { display: flex; align-items: center; gap: 2px; padding: 1px 7px 0 4px; background: #dcdcdc; border: 1px solid #d0d0d0; border-top: 0; }
.doc.on { background: #f8f8f8; }
.doc svg { width: 9px; height: 9px; }
.doc button { margin-left: 3px; }

.status { flex: none; height: 15px; display: flex; align-items: center; padding: 2px 1px 0 3px; gap: 5px; }
.status > span:first-child { flex: 1; }
.nav { display: flex; align-items: center; gap: 1px; }
.nav svg { width: 7px; height: 8px; }
.nav .arrow { width: 4px; height: 4px; }
```
